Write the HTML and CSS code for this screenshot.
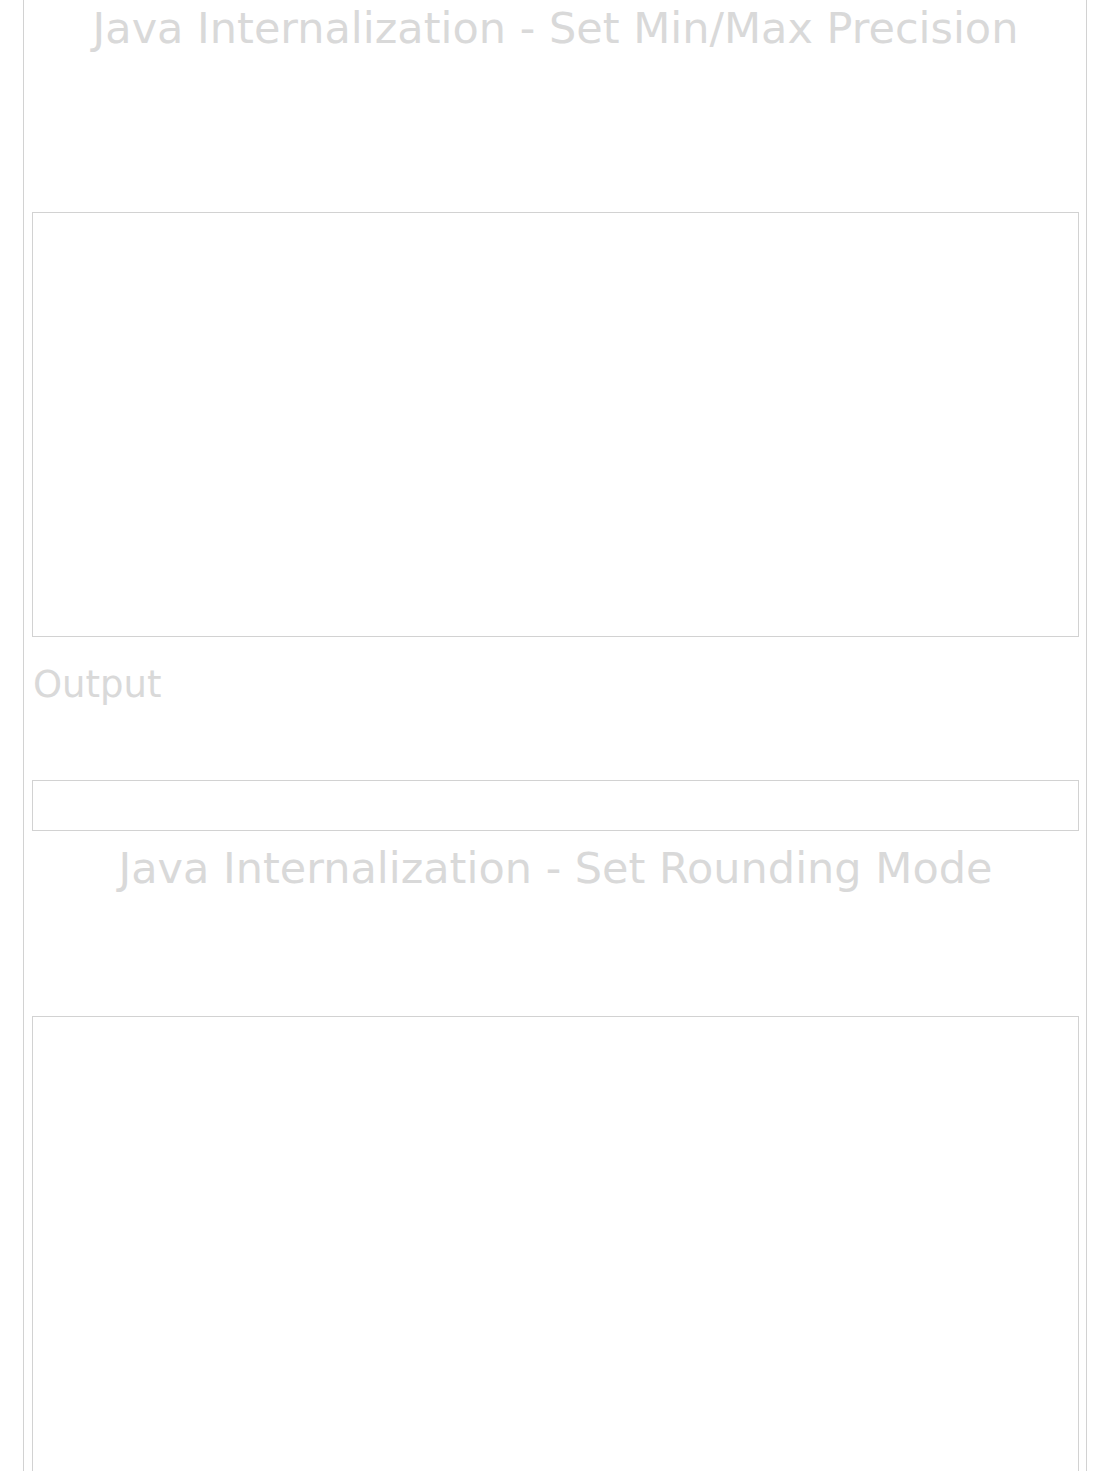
FILE: index.html
```html
<!DOCTYPE html>
<html>
<head>
<meta charset="utf-8">
<link rel="stylesheet" href="styles.css">
</head>
<body>
<div class="page">
  <h1 class="title title-first">Java Internalization - Set Min/Max Precision</h1>
  <div class="code-box code-box-tall"></div>
  <h2 class="output-label">Output</h2>
  <div class="code-box output-box"></div>
  <h1 class="title title-second">Java Internalization - Set Rounding Mode</h1>
  <div class="code-box code-box-last"></div>
</div>
</body>
</html>
```
FILE: styles.css
```css
html, body {
  margin: 0;
  padding: 0;
  background: #ffffff;
  font-family: "DejaVu Sans", Verdana, sans-serif;
  color: #d9d9d9;
}
.page {
  margin-left: 23px;
  width: 1064px;
  height: 1471px;
  box-sizing: border-box;
  border-left: 1px solid #d2d2d2;
  border-right: 1px solid #d2d2d2;
  padding: 0 7px 0 8px;
  overflow: hidden;
}
.title {
  margin: 0;
  font-weight: normal;
  font-size: 43px;
  line-height: 50px;
  text-align: center;
}
.title-first {
  margin-top: 3px;
}
.title-second {
  margin-top: 12px;
}
.code-box {
  border: 1px solid #d2d2d2;
  box-sizing: border-box;
  background: #ffffff;
}
.code-box-tall {
  height: 425px;
  margin-top: 159px;
}
.output-label {
  margin: 26px 0 0 1px;
  font-weight: normal;
  font-size: 37px;
  line-height: 44px;
}
.output-box {
  height: 51px;
  margin-top: 73px;
}
.code-box-last {
  height: 455px;
  margin-top: 123px;
  border-bottom: none;
}
```
